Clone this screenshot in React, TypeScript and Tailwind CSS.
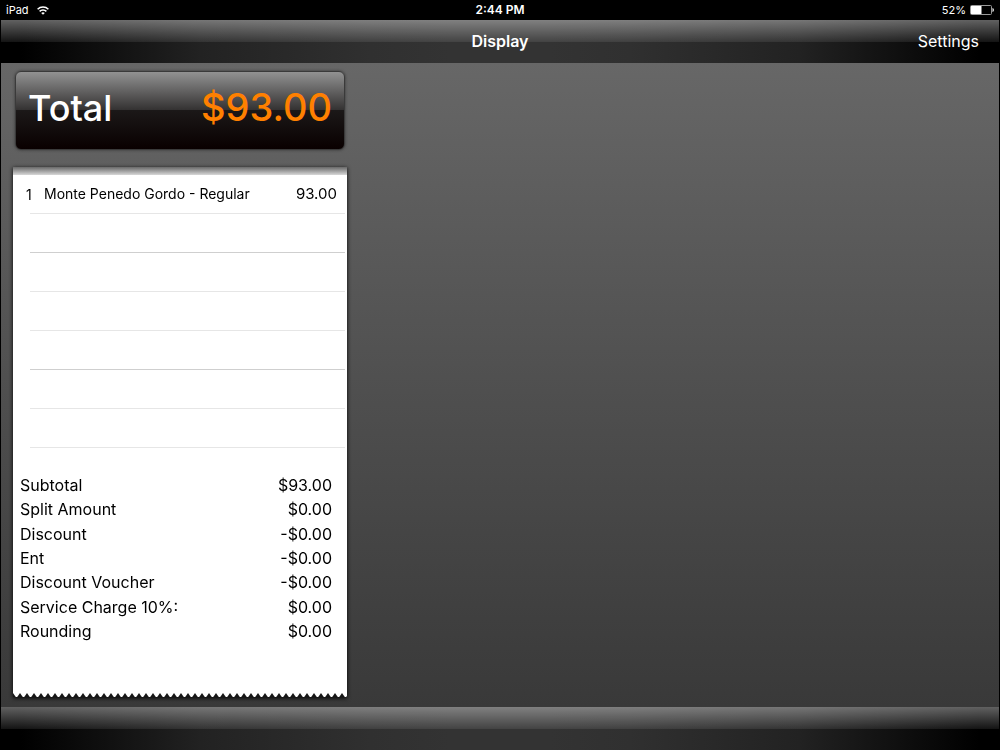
import React from 'react';
import clsx from 'clsx';

interface LineItem {
  qty: number;
  name: string;
  price: string;
}

const ROW_COUNT = 7;

const items: LineItem[] = [{ qty: 1, name: 'Monte Penedo Gordo - Regular', price: '93.00' }];

const totals = [
  { label: 'Subtotal', amount: '$93.00' },
  { label: 'Split Amount', amount: '$0.00' },
  { label: 'Discount', amount: '-$0.00' },
  { label: 'Ent', amount: '-$0.00' },
  { label: 'Discount Voucher', amount: '-$0.00' },
  { label: 'Service Charge 10%:', amount: '$0.00' },
  { label: 'Rounding', amount: '$0.00' },
];

const WifiIcon = () => (
  <svg width="12" height="9" viewBox="0 0 12 9" fill="none" stroke="#fff" strokeWidth="1.5" aria-hidden="true">
    <path d="M0.6 3.3a7.6 7.6 0 0 1 10.8 0" />
    <path d="M2.6 5.4a4.8 4.8 0 0 1 6.8 0" />
    <path d="M6 8.8 4.2 7a2.6 2.6 0 0 1 3.6 0Z" fill="#fff" stroke="none" />
  </svg>
);

const BatteryIcon = () => (
  <svg width="24" height="10" viewBox="0 0 24 10" aria-hidden="true">
    <rect x="0.5" y="0.5" width="21" height="9" rx="1" fill="none" stroke="#9a9a9a" />
    <rect x="1" y="1" width="10.5" height="8" fill="#fff" />
    <path d="M22.5 3v4c.9-.4 1.3-1.1 1.3-2s-.4-1.6-1.3-2Z" fill="#fff" />
  </svg>
);

const StatusBar = () => (
  <div className="grid h-5 grid-cols-3 items-center bg-black px-1.5 text-[11px] text-white">
    <div className="flex items-center gap-2">
      <span>iPad</span>
      <WifiIcon />
    </div>
    <div className="text-center text-xs font-semibold">2:44 PM</div>
    <div className="flex items-center justify-end gap-1">
      <span>52%</span>
      <BatteryIcon />
    </div>
  </div>
);

// Two layers: a white gloss over the top half, and the dark bar lit from the middle
const glossyBar =
  'h-[43px] shrink-0 border-x border-black bg-[linear-gradient(to_bottom,rgba(255,255,255,0.38),rgba(255,255,255,0.08)_51%,transparent_51%),linear-gradient(to_right,#000_2%,#222_20%,#303030_37%,#333_45%,#333_55%,#303030_63%,#222_80%,#000_98%)]';

const ItemsTable = () => (
  <table className="w-full table-fixed border-separate border-spacing-0 text-sm">
    <colgroup>
      <col className="w-[17px]" />
      <col />
      <col className="w-20" />
      <col className="w-0.5" />
    </colgroup>
    <tbody>
      {Array.from({ length: ROW_COUNT }, (_, i) => {
        const item = items[i];
        const line = clsx('border-b', i === 1 || i === 4 ? 'border-[#cfcfcf]' : 'border-[#e6e6e6]');
        return (
          <tr key={i} className="h-[39px]">
            <td className="whitespace-nowrap pl-[13px]">{item?.qty}</td>
            <td className={clsx(line, 'whitespace-nowrap pl-3.5')}>{item?.name}</td>
            <td className={clsx(line, 'pr-2 text-right text-[15px]')}>{item?.price}</td>
            <td />
          </tr>
        );
      })}
    </tbody>
  </table>
);

const TotalsTable = () => (
  <table className="mt-[25px] h-[170px] w-full text-base">
    <tbody>
      {totals.map((row) => (
        <tr key={row.label}>
          <th scope="row" className="pl-[7px] text-left font-normal">
            {row.label}
          </th>
          <td className="pr-[15px] text-right">{row.amount}</td>
        </tr>
      ))}
    </tbody>
  </table>
);

const TornEdge = () => (
  <svg className="block h-1 w-full shrink-0 bg-[#161616]" aria-hidden="true">
    <defs>
      <pattern id="teeth" width="7" height="4" patternUnits="userSpaceOnUse">
        <path d="M0 0h7L4.2 4H2.8Z" fill="#fff" />
      </pattern>
    </defs>
    <rect width="100%" height="4" fill="url(#teeth)" />
  </svg>
);

export default function App() {
  return (
    <div className="flex min-h-screen flex-col bg-black font-['Inter','Liberation_Sans',sans-serif]">
      <StatusBar />

      <header className={clsx(glossyBar, 'grid grid-cols-3 items-center px-5 pb-px text-white')}>
        <h1 className="col-start-2 text-center text-base font-semibold">Display</h1>
        <button type="button" className="justify-self-end text-base">
          Settings
        </button>
      </header>

      <main className="flex flex-1 border-x border-black bg-linear-to-b from-[#676767] to-[#393939] px-3 pt-2 pb-2.5">
        <div className="flex w-[334px] flex-col">
          {/* Total */}
          <section className="mx-0.5 flex h-[79px] items-center justify-between rounded-md border border-[#3a3a3a] bg-[linear-gradient(to_bottom,#929292,#343232_49%,#1b1818_50%,#090000)] px-3 pb-1.5 shadow-[0_0_3px_#333]">
            <h2 className="text-4xl font-medium text-white">Total</h2>
            <span className="text-[38px] font-medium text-[#ff8000]">$93.00</span>
          </section>

          {/* Receipt */}
          <section className="mt-[17px] flex flex-1 flex-col drop-shadow-[0_1px_2px_#000]">
            <div className="flex flex-1 flex-col bg-white text-black">
              <div className="h-2 shrink-0 bg-linear-to-b from-[#6a6a6a] to-[#d8d8d8]" />
              <ItemsTable />
              <TotalsTable />
            </div>
            <TornEdge />
          </section>
        </div>
      </main>

      <footer className={glossyBar} />
    </div>
  );
}
